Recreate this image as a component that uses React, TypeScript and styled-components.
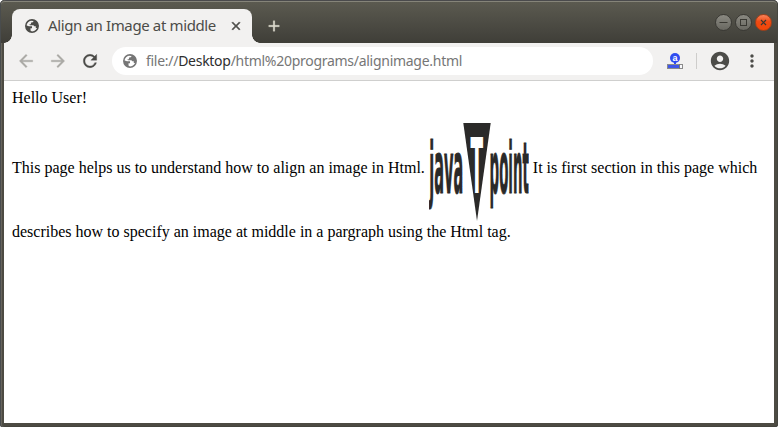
import React from "react";
import styled, { createGlobalStyle } from "styled-components";
import {
  MdArrowBack,
  MdArrowForward,
  MdRefresh,
  MdAccountCircle,
  MdMoreVert,
  MdClose,
  MdAdd,
} from "react-icons/md";

const GlobalStyle = createGlobalStyle`
  html, body { margin: 0; background: #fff; overflow: hidden; }
  *, *::before, *::after { box-sizing: border-box; }
  svg { display: block; flex: none; }
`;

const Window = styled.div`
  width: 778px;
  height: 427px;
  display: flex;
  flex-direction: column;
  padding: 1px 4px 4px;
  border-radius: 5px 5px 3px 3px;
  background: #4d4b43;
  box-shadow: inset 1px 0 #494c4d, inset 2px 0 #66645c, inset -1px 0 #454640,
    inset 0 -1px #45443d, inset 0 1px #4a4a4c;
  font-family: "Noto Sans", sans-serif;
`;

const TitleBar = styled.header`
  display: flex;
  align-items: flex-end;
  height: 42px;
  margin: 0 -3px;
  padding: 0 3px;
  border-top: 1px solid #858479;
  border-radius: 4px 4px 0 0;
  background: linear-gradient(#5b5a50, #3f3e38);
`;

const Tab = styled.div`
  position: relative;
  display: flex;
  align-items: center;
  width: 240px;
  height: 34px;
  margin-left: 8px;
  padding: 0 9px 0 13px;
  border-radius: 8px 8px 0 0;
  background: #f2f1f0;
  color: #4c4c48;

  &::before,
  &::after {
    content: "";
    position: absolute;
    bottom: 0;
    width: 8px;
    height: 8px;
  }
  &::before {
    right: 100%;
    background: radial-gradient(circle at 0 0, transparent 7.5px, #f2f1f0 8px);
  }
  &::after {
    left: 100%;
    background: radial-gradient(circle at 100% 0, transparent 7.5px, #f2f1f0 8px);
  }
`;

const TabTitle = styled.span`
  flex: 1;
  margin: -2px 0 0 9px;
  font-size: 15px;
  line-height: 20px;
  letter-spacing: -0.37px;
  white-space: nowrap;
`;

const TabClose = styled(MdClose)`
  path:not([fill="none"]) {
    stroke: currentColor;
    stroke-width: 1px;
  }
`;

const NewTab = styled.div`
  display: flex;
  align-items: center;
  height: 34px;
  margin-left: 13px;
  color: #e2dfd2;

  path:not([fill="none"]) {
    stroke: currentColor;
    stroke-width: 0.4px;
  }
`;

const WindowControls = styled.div`
  display: flex;
  gap: 3px;
  align-self: flex-start;
  margin: 12px 2px 0 auto;
`;

const Control = styled.div<{ $close?: boolean }>`
  display: grid;
  place-items: center;
  width: 17px;
  height: 17px;
  border: 1px solid ${(p) => (p.$close ? "#a64018" : "#3a3934")};
  border-radius: 50%;
  background: ${(p) =>
    p.$close ? "linear-gradient(#f9845c, #f04a12 45%, #f34708)" : "linear-gradient(#8a8981, #696861)"};
  color: #393832;
`;

const Toolbar = styled.nav`
  display: flex;
  align-items: center;
  height: 38px;
  padding: 0 12px 1px;
  border-bottom: 1px solid #cfcfce;
  background: #f2f1f0;
  color: #4c4c48;
`;

const NavIcon = styled.div<{ $muted?: boolean }>`
  width: 20px;
  margin-right: 12px;
  color: ${(p) => (p.$muted ? "#aaa9a5" : "#4a4a47")};

  path:not([fill="none"]) {
    stroke: currentColor;
    stroke-width: 0.4px;
  }
`;

const AddressBar = styled.div`
  display: flex;
  flex: none;
  align-items: center;
  width: 541px;
  height: 28px;
  padding-left: 11px;
  border-radius: 14px;
  background: #fff;
  color: #767676;
`;

const Url = styled.span`
  margin-left: 9px;
  font-size: 14px;
  line-height: 20px;
  letter-spacing: -0.28px;
  white-space: nowrap;
`;

const Host = styled.span`
  color: #2e2e2e;
`;

const Extension = styled.div`
  margin-left: 14px;
`;

const Divider = styled.div`
  width: 1px;
  height: 16px;
  margin: 0 12px 0 13px;
  background: #cecdcb;
`;

const Menu = styled.div`
  margin-left: 11px;
`;

const Page = styled.main`
  flex: 1;
  padding: 8px;
  background: #fff;
  color: #000;
  font: 16px/18px "Liberation Serif", serif;
`;

const Greeting = styled.p`
  margin: 0 0 8px;
`;

const Paragraph = styled.p`
  margin: 0;
`;

const Logo = styled.svg`
  && {
    display: inline-block;
    vertical-align: middle;
  }
`;

const LogoWord = styled.text`
  stroke: currentColor;
  stroke-width: 0.7px;
  vector-effect: non-scaling-stroke;
`;

const Globe = ({ size }: { size: number }) => (
  <svg width={size} height={size} viewBox="0 0 16 16">
    <circle cx="8" cy="8" r="7.1" fill="none" stroke="currentColor" strokeWidth="1.7" />
    <path
      fill="currentColor"
      d="M1 7l3.5 1.2H8v2.3H6.3V13L8 14.8C4 15.5.5 11.5 1 7zM5.2 1.6L9.8 1v1.6L8.3 4.1H6.8v1.8H4.9L5.8 7h3.8l1 1.4h1.7v1.8h2.4l.6-3.2L13.9 4l-1.6-1.7L9.5 1z"
    />
  </svg>
);

const MinimizeGlyph = () => (
  <svg width="15" height="15" viewBox="0 0 15 15">
    <path d="M3.5 7.5h8" stroke="currentColor" />
  </svg>
);

const MaximizeGlyph = () => (
  <svg width="15" height="15" viewBox="0 0 15 15">
    <rect x="4.5" y="4.5" width="6" height="6" fill="none" stroke="currentColor" />
  </svg>
);

const CloseGlyph = () => (
  <svg width="15" height="15" viewBox="0 0 15 15">
    <path d="M5 5l5 5M10 5l-5 5" stroke="currentColor" strokeWidth="1.2" />
  </svg>
);

const ExtensionGlyph = () => (
  <svg width="16" height="17" viewBox="0 0 16 17">
    <circle cx="8" cy="5" r="5" fill="#2f4cf0" />
    <text x="8" y="7.7" textAnchor="middle" fontFamily="Liberation Sans" fontWeight="700" fontSize="9" fill="#fff">
      a
    </text>
    <path d="M7 9h2v2H7z" fill="#2f4cf0" />
    <rect x="0.5" y="11.5" width="15" height="4" fill="#f8f8fb" stroke="#8b8b8b" />
    <path d="M1 12h11v3H1z" fill="#4057e8" />
    <path d="M12.5 11v5" stroke="#777" />
  </svg>
);

const JavaTpoint = () => (
  <Logo
    width="100"
    height="108"
    viewBox="0 -6 100 108"
    color="#2b2a29"
    fill="#2b2a29"
    fontFamily="DejaVu Sans"
    fontWeight="700"
  >
    <path d="M34.3 2h27.4L48 100z" />
    <g fontSize="20">
      <LogoWord transform="translate(0.2 72) scale(0.7 3.6)" textLength="48.5" lengthAdjust="spacingAndGlyphs">
        java
      </LogoWord>
      <LogoWord transform="translate(60.6 72) scale(0.7 3.6)" textLength="56" lengthAdjust="spacingAndGlyphs">
        point
      </LogoWord>
      <text
        transform="translate(41.5 72.3) scale(0.9 3.8)"
        textLength="14"
        lengthAdjust="spacingAndGlyphs"
        fill="#fff"
      >
        T
      </text>
    </g>
  </Logo>
);

export default function App() {
  return (
    <>
      <GlobalStyle />
      <Window>
        <TitleBar>
          <Tab>
            <Globe size={14} />
            <TabTitle>Align an Image at middle</TabTitle>
            <TabClose size={14} />
          </Tab>
          <NewTab>
            <MdAdd size={18} />
          </NewTab>
          <WindowControls>
            <Control>
              <MinimizeGlyph />
            </Control>
            <Control>
              <MaximizeGlyph />
            </Control>
            <Control $close>
              <CloseGlyph />
            </Control>
          </WindowControls>
        </TitleBar>
        <Toolbar>
          <NavIcon $muted>
            <MdArrowBack size={20} />
          </NavIcon>
          <NavIcon $muted>
            <MdArrowForward size={20} />
          </NavIcon>
          <NavIcon>
            <MdRefresh size={20} />
          </NavIcon>
          <AddressBar>
            <Globe size={14} />
            <Url>
              file://<Host>Desktop</Host>/html%20programs/alignimage.html
            </Url>
          </AddressBar>
          <Extension>
            <ExtensionGlyph />
          </Extension>
          <Divider />
          <MdAccountCircle size={22} />
          <Menu>
            <MdMoreVert size={20} />
          </Menu>
        </Toolbar>
        <Page>
          <Greeting>Hello User!</Greeting>
          <Paragraph>
            This page helps us to understand how to align an image in Html. <JavaTpoint /> It is first section in
            this page which describes how to specify an image at middle in a pargraph using the Html tag.
          </Paragraph>
        </Page>
      </Window>
    </>
  );
}
